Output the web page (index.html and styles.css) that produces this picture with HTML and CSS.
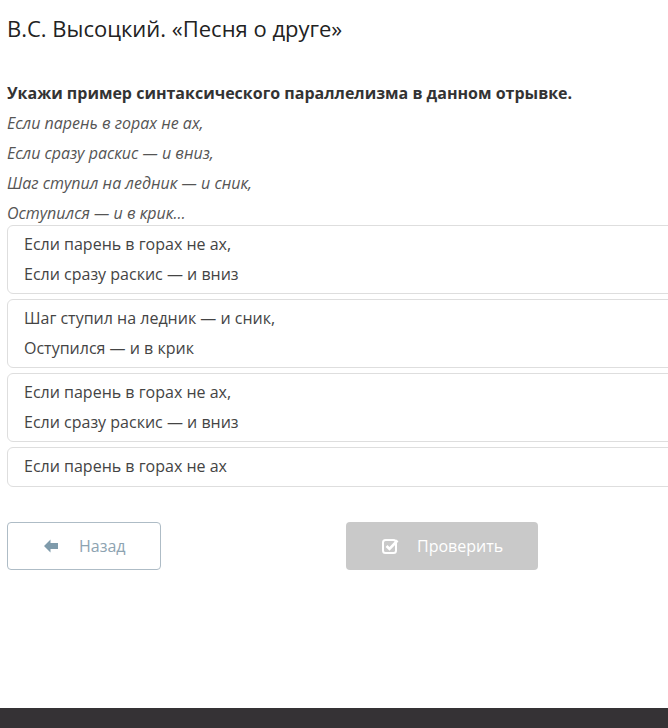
FILE: index.html
```html
<!DOCTYPE html>
<html lang="ru">
<head>
<meta charset="utf-8">
<link rel="stylesheet" href="styles.css">
</head>
<body>
<div class="page">
  <main class="content">
    <h1 class="title">В.С. Высоцкий. «Песня о друге»</h1>
    <p class="question">Укажи пример синтаксического параллелизма в данном отрывке.</p>
    <div class="poem">
      <p>Если парень в горах не ах,</p>
      <p>Если сразу раскис — и вниз,</p>
      <p>Шаг ступил на ледник — и сник,</p>
      <p>Оступился — и в крик…</p>
    </div>
    <div class="options">
      <div class="option"><p>Если парень в горах не ах,</p><p>Если сразу раскис — и вниз</p></div>
      <div class="option"><p>Шаг ступил на ледник — и сник,</p><p>Оступился — и в крик</p></div>
      <div class="option"><p>Если парень в горах не ах,</p><p>Если сразу раскис — и вниз</p></div>
      <div class="option"><p>Если парень в горах не ах</p></div>
    </div>
    <div class="actions">
      <button class="btn btn-back">
        <svg class="ico" width="16" height="14" viewBox="0 0 16 14"><path d="M7.5 0.5 L1 7 L7.5 13.5 L7.5 10 L15 10 L15 4 L7.5 4 Z" fill="#7f9bab"/></svg>
        <span>Назад</span>
      </button>
      <button class="btn btn-check">
        <svg class="ico" width="17" height="16" viewBox="0 0 17 16"><rect x="1" y="2" width="13" height="13" rx="2.5" fill="none" stroke="#fff" stroke-width="2"/><path d="M4.5 8 L7.5 11 L15.5 2.5" fill="none" stroke="#fff" stroke-width="2.6"/></svg>
        <span>Проверить</span>
      </button>
    </div>
  </main>
  <footer class="footer"></footer>
</div>
</body>
</html>
```
FILE: styles.css
```css
html, body {
  margin: 0;
  padding: 0;
  background: #fff;
  overflow: hidden;
}
.page {
  width: 668px;
  height: 728px;
  display: flex;
  flex-direction: column;
  overflow: hidden;
  font-family: "Open Sans", "Noto Sans", sans-serif;
}
.content {
  flex: 1;
  padding-left: 7px;
}
.title {
  margin: 13px 0 0;
  font-size: 22px;
  font-weight: 400;
  line-height: 30px;
  color: #222;
}
.question {
  margin: 35px 0 0;
  font-size: 16px;
  font-weight: 700;
  line-height: 30px;
  color: #333;
}
.poem p {
  margin: 0;
  font-size: 16px;
  font-style: italic;
  line-height: 30px;
  color: #555;
}
.options {
  margin-top: -3px;
  width: 690px;
  display: flex;
  flex-direction: column;
  gap: 5px;
}
.option {
  border: 1px solid #dedede;
  border-radius: 6px;
  padding: 3px 16px 4px;
  background: #fff;
}
.option:last-child {
  padding-bottom: 5px;
}
.option p {
  margin: 0;
  font-size: 16px;
  line-height: 30px;
  color: #444;
}
.actions {
  margin-top: 35px;
  display: flex;
  gap: 185px;
}
.btn {
  height: 48px;
  border-radius: 4px;
  font-family: "Open Sans", "Noto Sans", sans-serif;
  font-size: 16px;
  display: flex;
  align-items: center;
  gap: 20px;
  padding: 0;
  cursor: default;
}
.btn-back {
  width: 154px;
  border: 1px solid #aebcc6;
  background: #fff;
  color: #8da3b1;
  padding-left: 35px;
}
.btn-check {
  width: 192px;
  border: none;
  background: #c9c9c9;
  color: #fff;
  padding-left: 36px;
  gap: 18px;
}
.ico { flex: none; }
.footer {
  height: 20px;
  background: #353235;
}
```
